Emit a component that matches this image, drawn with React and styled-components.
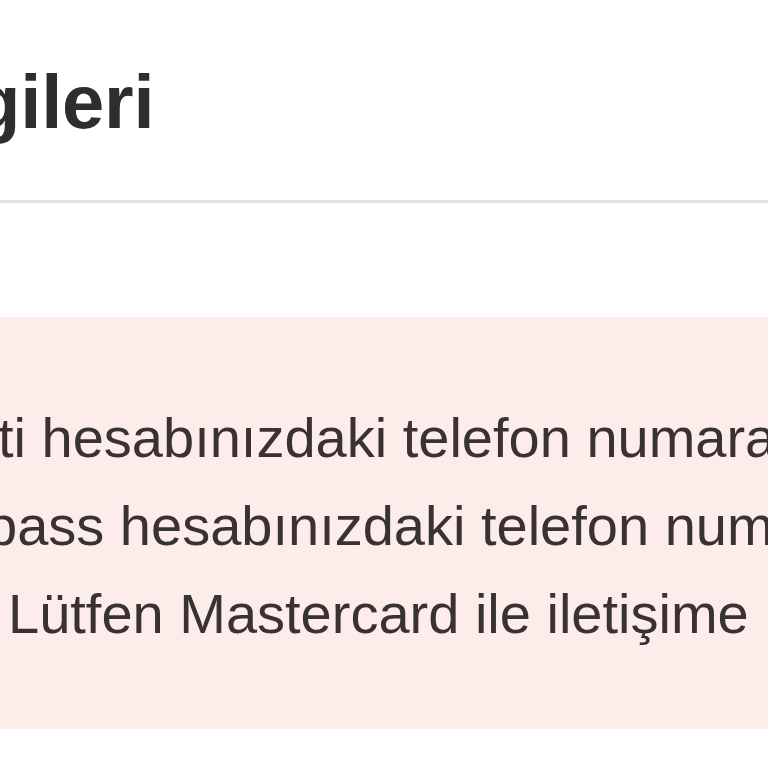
import React from 'react';
import styled, { createGlobalStyle } from 'styled-components';

const GlobalStyle = createGlobalStyle`
  html, body {
    margin: 0;
    padding: 0;
    background: #fff;
    overflow: hidden;
  }
  body {
    font-family: "Liberation Sans", Arial, Helvetica, sans-serif;
  }
`;

const Page = styled.div`
  width: 768px;
  height: 768px;
  overflow: hidden;
  background: #fff;
`;

const Header = styled.div`
  padding-top: 64px;
  padding-bottom: 60px;
  border-bottom: 3px solid #e1e1e1;
`;

const Title = styled.h1`
  margin: 0 0 0 -26px;
  font-size: 76px;
  line-height: 76px;
  font-weight: 700;
  color: #2e2e2e;
  white-space: nowrap;
  letter-spacing: -0.2px;
`;

const Notice = styled.div`
  margin-top: 114px;
  padding: 77px 0 71px;
  background: #fcedeb;
`;

const Line = styled.p`
  margin: 0 0 0 ${(p) => p.$shift}px;
  font-size: 56px;
  line-height: 88px;
  font-weight: 400;
  color: #383232;
  white-space: nowrap;
`;

export default function App() {
  return (
    <Page>
      <GlobalStyle />
      <Header>
        <Title>gileri</Title>
      </Header>
      <Notice>
        <Line $shift={-2}>ti hesabınızdaki telefon numarası</Line>
        <Line $shift={-14}>pass hesabınızdaki telefon numarası</Line>
        <Line $shift={8}>Lütfen Mastercard ile iletişime</Line>
      </Notice>
    </Page>
  );
}
